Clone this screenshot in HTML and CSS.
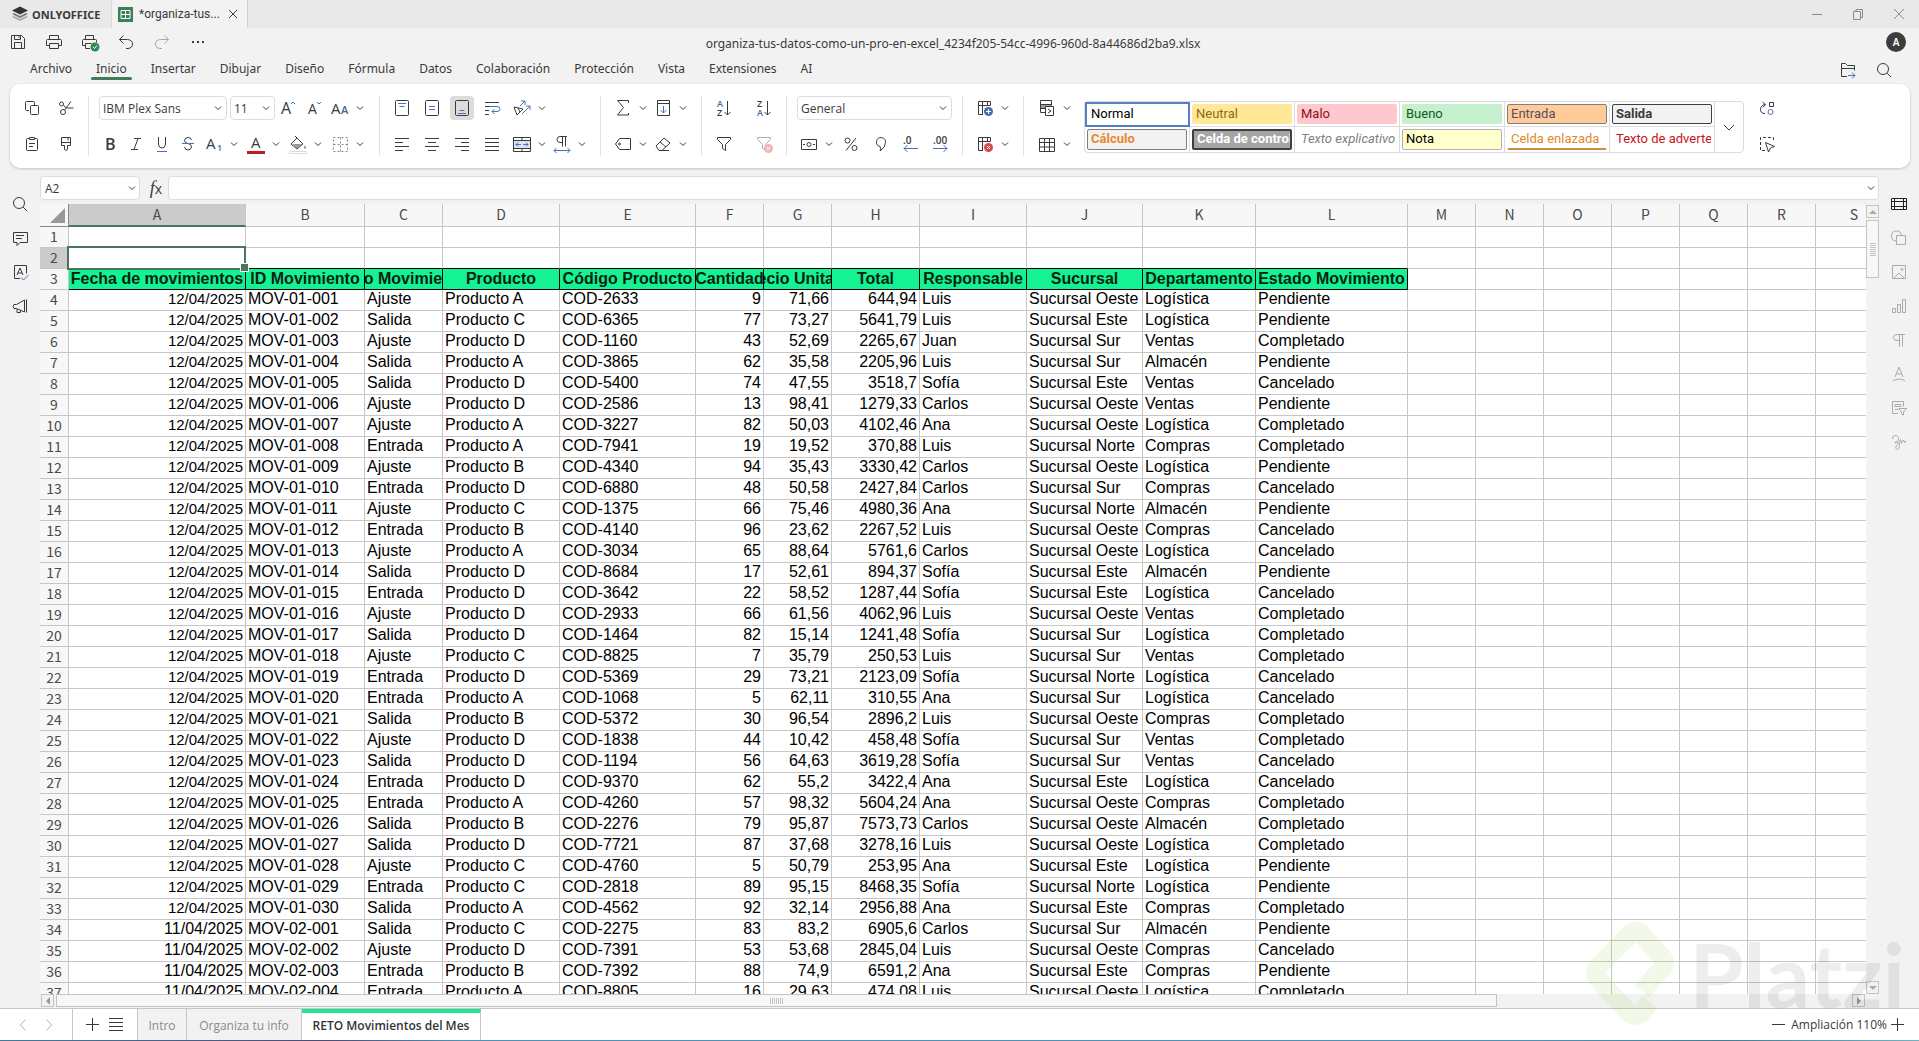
FILE: index.html
```html
<!DOCTYPE html>
<html lang="es">
<head>
    <meta charset="UTF-8">
    <meta name="viewport" content="width=device-width, initial-scale=1.0">
    <title>ONLYOFFICE</title>
    <link rel="stylesheet" href="styles.css">
</head>
<body>

<!-- icons -->
<svg class="sprite" aria-hidden="true">
    <symbol id="chev" viewBox="0 0 10 10"><path d="M2 3.500l3 3 3-3"/></symbol>
    <symbol id="save" viewBox="0 0 20 20"><path d="M3.500 3.500h10l3 3v10h-13zM6.500 3.500v4h6v-4M11 4.500v1.500M6.500 16.500v-6h7v6"/></symbol>
    <symbol id="print" viewBox="0 0 20 20"><path d="M5.500 7.500v-4h9v4M5.500 13.500h-3v-5q0-1 1-1h13q1 0 1 1v5h-3M5.500 11.500h9v5h-9z"/></symbol>
    <symbol id="printq" viewBox="0 0 20 20"><path d="M5.500 7.500v-4h8v4M5.500 13.500h-3v-5q0-1 1-1h12q1 0 1 1v2M10 16.500H5.500v-5h6"/><circle class="ok" cx="15" cy="15" r="4.500"/><path class="w" d="M13 15l1.500 1.500 2.500-3"/></symbol>
    <symbol id="undo" viewBox="0 0 20 20"><path d="M7.500 3.500l-4 4 4 4M3.500 7.500h8q5 .5 5 4.500 0 4-4.500 4.500h-2"/></symbol>
    <symbol id="redo" viewBox="0 0 20 20"><path d="M12.500 3.500l4 4-4 4M16.500 7.500h-8q-5 .5-5 4.500 0 4 4.500 4.500h2"/></symbol>
    <symbol id="dots" viewBox="0 0 20 20"><path class="f" d="M4 9h2v2H4zM9 9h2v2H9zM14 9h2v2h-2z"/></symbol>
    <symbol id="open" viewBox="0 0 20 20"><path d="M9 16.500H3.500v-13h4l2 2h7v5M3.500 8.500h13"/><path class="b" d="M10 15.500h7M14 12.500l3 3-3 3"/></symbol>
    <symbol id="search" viewBox="0 0 20 20"><circle cx="9" cy="9" r="5.500"/><path d="M13 13l4 4"/></symbol>
    <symbol id="copy" viewBox="0 0 20 20"><path d="M7 12.500H4.500q-1 0-1-1v-7q0-1 1-1h7q1 0 1 1V7"/><rect x="8.500" y="7.500" width="8" height="9" rx="1"/></symbol>
    <symbol id="cut" viewBox="0 0 20 20"><circle cx="5.500" cy="6" r="2"/><circle cx="7" cy="14" r="2.500"/><path d="M7.500 7.500l3 2.500h7M8.500 12L15 3.500"/></symbol>
    <symbol id="paste" viewBox="0 0 20 20"><rect x="4.500" y="4.500" width="11" height="12" rx="1"/><path class="p" d="M7.500 3.500h5v2h-5z"/><path d="M7 9.500h6M7 12.500h4"/></symbol>
    <symbol id="brush" viewBox="0 0 20 20"><path d="M5.500 3.500h9v8h-3v4q-1.500 2-3 0v-4h-3zM5.500 8.500h9M12 3.500v3"/></symbol>
    <symbol id="big" viewBox="0 0 20 20"><text x="3" y="16" font-size="16">A</text><path class="b" d="M13 6l2-2 2 2"/></symbol>
    <symbol id="small" viewBox="0 0 20 20"><text x="4" y="16" font-size="14">A</text><path class="b" d="M13 4l2 2 2-2"/></symbol>
    <symbol id="case" viewBox="0 0 20 20"><text x="1" y="16" font-size="15">A</text><text class="bt" x="11" y="16" font-size="11">A</text></symbol>
    <symbol id="bold" viewBox="0 0 20 20"><text x="5" y="16" font-size="16" font-weight="600">B</text></symbol>
    <symbol id="italic" viewBox="0 0 20 20"><path d="M8 4.500h7M5 15.500h7M12 4.500l-4 11"/></symbol>
    <symbol id="under" viewBox="0 0 20 20"><path d="M6.500 3v7q0 4 3.500 4t3.500-4V3"/><path class="b" d="M5 17.500h10"/></symbol>
    <symbol id="strike" viewBox="0 0 20 20"><path d="M13.500 6Q13 3.500 10 3.500T6.500 6.500Q6.500 9 10 9.500T13.500 13Q13 16 10 16T6.500 13"/><path class="b" d="M4 9.500h12"/></symbol>
    <symbol id="sub" viewBox="0 0 20 20"><text x="2" y="15" font-size="15">A</text><text class="bt" x="13" y="17" font-size="9">1</text></symbol>
    <symbol id="color" viewBox="0 0 20 20"><text x="5" y="14" font-size="15">A</text><path class="r" d="M1 17h18v3H1z"/></symbol>
    <symbol id="fill" viewBox="0 0 20 20"><path d="M3 10l6-6 6 6-6 5zM9 4L7 2"/><path class="g" d="M4.500 10h10L9 14.500zM17 11q2 3 0 4-2-1 0-4"/><path class="l" d="M1.500 17.500h17v2h-17z"/></symbol>
    <symbol id="border" viewBox="0 0 20 20"><path stroke-dasharray="2 2" d="M3.500 3.500h14v14h-14zM10.500 3.500v14M3.500 10.500h14"/></symbol>
    <symbol id="vtop" viewBox="0 0 20 20"><rect x="3.500" y="2.500" width="13" height="15" rx="1"/><path class="b" d="M6 5.500h8M7.500 8.500h5"/></symbol>
    <symbol id="vmid" viewBox="0 0 20 20"><rect x="3.500" y="2.500" width="13" height="15" rx="1"/><path class="b" d="M7 8.500h6M7 11.500h6"/></symbol>
    <symbol id="vbot" viewBox="0 0 20 20"><rect x="3.500" y="2.500" width="13" height="15" rx="1"/><path class="b" d="M7.500 12.500h5M6 15.500h8"/></symbol>
    <symbol id="wrap" viewBox="0 0 20 20"><path d="M3 4.500h14M3 12.500h4M3 16.500h4M3 8.500h4"/><path class="b" d="M7 8.500h8q3 0 3 2.500t-3 2.500h-5M12.500 11L10 13.500l2.500 2.500"/></symbol>
    <symbol id="orient" viewBox="0 0 20 20"><path d="M2 9l9 2-6 6zM6 10l2 4"/><path class="b" d="M8 8l5-5M9 3h4v4M10 16l8-8M14 8h4v4"/></symbol>
    <symbol id="hleft" viewBox="0 0 20 20"><path d="M3 4.500h14M3 8.500h8M3 12.500h14M3 16.500h8"/></symbol>
    <symbol id="hmid" viewBox="0 0 20 20"><path d="M3 4.500h14M6 8.500h8M3 12.500h14M6 16.500h8"/></symbol>
    <symbol id="hright" viewBox="0 0 20 20"><path d="M3 4.500h14M9 8.500h8M3 12.500h14M9 16.500h8"/></symbol>
    <symbol id="hjust" viewBox="0 0 20 20"><path d="M3 4.500h14M3 8.500h14M3 12.500h14M3 16.500h14"/></symbol>
    <symbol id="merge" viewBox="0 0 20 20"><path class="lb" d="M2 7h16v7H2z"/><path d="M1.500 3.500h17v14h-17zM1.500 6.500h17M1.500 14.500h17M10 3.500v3M10 14.500v3"/><path class="b" d="M4 10.500h5M11 10.500h5M6 8.500l-2 2 2 2M14 8.500l2 2-2 2"/></symbol>
    <symbol id="para" viewBox="0 0 20 20"><path d="M15 2.500H8q-3 0-3 3t3 3h2M10.500 2.500v10M13.500 2.500v10"/><path class="b" d="M2 16.500h16M4.500 14L2 16.500 4.500 19M15.500 14l2.500 2.500-2.500 2.500"/></symbol>
    <symbol id="sum" viewBox="0 0 20 20"><path d="M15.500 5V2.500h-11l6 7-6 7.500h11V15"/></symbol>
    <symbol id="filldown" viewBox="0 0 20 20"><path d="M4.500 2.500h12v15h-12zM4.500 5.500h12"/><path class="b" d="M10.500 8v7M7.500 12l3 3 3-3"/></symbol>
    <symbol id="tag" viewBox="0 0 20 20"><path d="M6.500 4.500h11v11h-11L2.500 10z"/><circle cx="6.500" cy="10" r="1"/></symbol>
    <symbol id="eraser" viewBox="0 0 20 20"><path d="M3 12l8-8 6 5-8 7.500H6zM7 8l6 5M6 16.500h10"/></symbol>
    <symbol id="az" viewBox="0 0 20 20"><text class="bt" x="3" y="9" font-size="9" font-weight="600">A</text><text x="3" y="18" font-size="9" font-weight="600">Z</text><path d="M13.500 3v14M10.500 14l3 3 3-3"/></symbol>
    <symbol id="za" viewBox="0 0 20 20"><text x="3" y="9" font-size="9" font-weight="600">Z</text><text class="bt" x="3" y="18" font-size="9" font-weight="600">A</text><path d="M13.500 3v14M10.500 14l3 3 3-3"/></symbol>
    <symbol id="filter" viewBox="0 0 20 20"><path d="M3.500 3.500h13v2l-5 5v6l-3-2v-4l-5-5z"/></symbol>
    <symbol id="nofilter" viewBox="0 0 20 20"><path d="M3.500 3.500h13v2l-5 5v6l-3-2v-4l-5-5z"/><circle class="x" cx="14.500" cy="14.500" r="4.500"/><path class="w" d="M13 13l3 3M16 13l-3 3"/></symbol>
    <symbol id="money" viewBox="0 0 20 20"><path d="M2.500 5.500h15v10h-15z"/><circle cx="10" cy="10.500" r="2"/><path class="f" d="M4 10h2v1H4zM14 10h2v1h-2z"/></symbol>
    <symbol id="percent" viewBox="0 0 20 20"><circle cx="6.500" cy="6.500" r="2.500"/><circle cx="13.500" cy="14" r="2.500"/><path d="M15 4L5 16.500"/></symbol>
    <symbol id="comma" viewBox="0 0 20 20"><path d="M9 12.500a4.500 4.500 0 1 1 5.500-4q0 5-5.500 8.500 1.500-2.500 0-4.500z"/></symbol>
    <symbol id="dec0" viewBox="0 0 20 20"><text x="2" y="10" font-size="10" font-weight="600">.0</text><path class="b" d="M3 14.500h14M6.500 11L3 14.500 6.500 18"/></symbol>
    <symbol id="dec00" viewBox="0 0 20 20"><text x="2" y="10" font-size="10" font-weight="600">.00</text><path class="b" d="M2 14.500h14M12.500 11l3.500 3.500-3.500 3.500"/></symbol>
    <symbol id="inscell" viewBox="0 0 20 20"><path d="M8 16.500H3.500v-13h12v4h-12M7.500 3.500v13M12.500 3.500v4"/><circle class="bf" cx="13.500" cy="13.500" r="4.500"/><path class="w" d="M11 13.500h5M13.500 11v5"/></symbol>
    <symbol id="delcell" viewBox="0 0 20 20"><path d="M8 16.500H3.500v-13h12v4h-12M7.500 3.500v13M12.500 3.500v4"/><circle class="x" cx="13.500" cy="13.500" r="4.500"/><path class="w" d="M12 12l3 3M15 12l-3 3"/></symbol>
    <symbol id="cond" viewBox="0 0 20 20"><path class="g" d="M3 7h11v4H3z"/><path d="M8 14.500H3.500v-12h11v5M3.500 6.500h11M3.500 10.500h5"/><path class="p" d="M8.500 8.500h8v9h-8z"/><path d="M11 11l3 2-3 2"/></symbol>
    <symbol id="table" viewBox="0 0 20 20"><path d="M2.500 4.500h15v13h-15zM2.500 8.500h15M2.500 13h15M7.500 4.500v13M12.500 4.500v13"/></symbol>
    <symbol id="replace" viewBox="0 0 20 20"><path d="M8 15.500q-4.500 0-4.500-4t4.500-5M5.500 4l3 2.500-2.500 3M12.500 4.500h4v4h-4z"/><circle class="b" cx="13.500" cy="14" r="2.500"/></symbol>
    <symbol id="select" viewBox="0 0 20 20"><path stroke-dasharray="3 2" d="M8 16.500H3.500v-13h13V8"/><path d="M8.500 8.500l9 4-4 1.500-2 4z"/></symbol>
    <symbol id="comment" viewBox="0 0 20 20"><path d="M3.500 4.500h14v10H10l-3 3v-3H3.500zM6 7.500h8M6 10.500h6"/></symbol>
    <symbol id="spell" viewBox="0 0 20 20"><path d="M10 16.500H4.500v-13h12v8M7 13l3-7 3 7M8 11h4"/><path class="b" d="M11 15.500l2.500 2.500 5-5"/></symbol>
    <symbol id="horn" viewBox="0 0 20 20"><path d="M4 8.500h2.500l8-4.500v12l-8-3.500H4q-2-2 0-4zM7 13v3.500h3.500V14M16.500 3.500v13"/></symbol>
    <symbol id="cellset" viewBox="0 0 20 20"><path d="M2.500 4.500h15v11h-15zM2.500 7.500h15M2.500 12.500h15M5.500 4.500v11M14.500 4.500v11"/></symbol>
    <symbol id="shape" viewBox="0 0 20 20"><path d="M7 13a5 5 0 1 1 5.500-5.500"/><path d="M7.500 7.500h9v9h-9z"/></symbol>
    <symbol id="image" viewBox="0 0 20 20"><path d="M3.500 3.500h13v13h-13zM5 16l5-5 5 5"/><circle cx="13" cy="7.500" r="1"/></symbol>
    <symbol id="chart" viewBox="0 0 20 20"><path d="M3.500 12.500h3v4h-3zM8.500 8.500h3v8h-3zM13.500 3.500h3v13h-3z"/></symbol>
    <symbol id="pilcrow" viewBox="0 0 20 20"><path d="M16 4.500H8q-3.500 0-3.500 3t3.500 3h2M10.500 4.500v12M13.500 4.500v12"/></symbol>
    <symbol id="textart" viewBox="0 0 20 20"><path d="M6 13l4-10 4 10M7.500 10h5M4 17q6-4 12 0"/></symbol>
    <symbol id="slicer" viewBox="0 0 20 20"><path d="M9 15.500H3.500v-12h11v5M6 6.500h6v2H6zM6 11.500h3M9.500 10.500h8l-3 3.500v3l-2-1v-2z"/></symbol>
    <symbol id="sign" viewBox="0 0 20 20"><path d="M3.500 7Q3 4 6 3.500q4 0 3.500 4-1 3-4 3 5-1 5 3 0 4-2.500 4-2.500-1-.5-4 3-2 4-6l1 4q1-4 2.500-3l.5 2 2-1"/></symbol>
</svg>

<div class="titlebar">
    <a class="brand" href="#">
        <svg width="16" height="16" viewBox="0 0 16 16"><path fill="#aaa" d="M0 11l8 4 8-4-2-1-6 3-6-3z"/><path fill="#777" d="M0 8l8 4 8-4-2-1-6 3-6-3z"/><path fill="#333" d="M0 4.500l8 4 8-4-8-4z"/></svg>
        ONLYOFFICE
    </a>
    <div class="doc-tab">
        <svg width="15" height="15" viewBox="0 0 15 15"><path fill="#3b8058" d="M0 0h15v15H0z"/><path fill="none" stroke="#fff" d="M3 3.500h9v8H3zM7.500 3.500v8M3 7.500h9"/></svg>
        <span>*organiza-tus...</span>
        <button class="close" aria-label="Cerrar"><svg width="10" height="10" viewBox="0 0 10 10"><path d="M1 1l8 8M9 1L1 9"/></svg></button>
    </div>
    <div class="win">
        <button aria-label="Minimizar"><svg width="12" height="12" viewBox="0 0 12 12"><path d="M1 6.500h10"/></svg></button>
        <button aria-label="Restaurar"><svg width="12" height="12" viewBox="0 0 12 12"><path d="M1.500 3.500h7v8h-7zM4 3.500v-2h6.500v8h-2"/></svg></button>
        <button aria-label="Cerrar"><svg width="12" height="12" viewBox="0 0 12 12"><path d="M1 1l10 10M11 1L1 11"/></svg></button>
    </div>
</div>

<header class="header">
    <div class="quick">
        <div class="quick-btns">
            <button aria-label="Guardar"><svg><use href="#save"/></svg></button>
            <button aria-label="Imprimir"><svg><use href="#print"/></svg></button>
            <button aria-label="Impresión rápida"><svg><use href="#printq"/></svg></button>
            <button aria-label="Deshacer"><svg><use href="#undo"/></svg></button>
            <button aria-label="Rehacer" class="off"><svg><use href="#redo"/></svg></button>
            <button aria-label="Más"><svg><use href="#dots"/></svg></button>
        </div>
        <div class="doc-name">organiza-tus-datos-como-un-pro-en-excel_4234f205-54cc-4996-960d-8a44686d2ba9.xlsx</div>
        <div class="user"><span>A</span></div>
    </div>
    <nav class="menu">
        <a href="#">Archivo</a>
        <a href="#" class="active">Inicio</a>
        <a href="#">Insertar</a>
        <a href="#">Dibujar</a>
        <a href="#">Diseño</a>
        <a href="#">Fórmula</a>
        <a href="#">Datos</a>
        <a href="#">Colaboración</a>
        <a href="#">Protección</a>
        <a href="#">Vista</a>
        <a href="#">Extensiones</a>
        <a href="#">AI</a>
        <div class="menu-right">
            <button aria-label="Abrir ubicación"><svg><use href="#open"/></svg></button>
            <button aria-label="Buscar"><svg><use href="#search"/></svg></button>
        </div>
    </nav>
</header>

<div class="toolbar">
    <div class="group clip">
        <div class="row"><button aria-label="Copiar"><svg><use href="#copy"/></svg></button><button aria-label="Cortar"><svg><use href="#cut"/></svg></button></div>
        <div class="row"><button aria-label="Pegar"><svg><use href="#paste"/></svg></button><button aria-label="Copiar estilo"><svg><use href="#brush"/></svg></button></div>
    </div>
    <div class="group font">
        <div class="row">
            <label class="combo font-name"><select aria-label="Fuente"><option>IBM Plex Sans</option></select><svg class="ch"><use href="#chev"/></svg></label>
            <label class="combo font-size"><select aria-label="Tamaño"><option>11</option></select><svg class="ch"><use href="#chev"/></svg></label>
            <button aria-label="Aumentar"><svg><use href="#big"/></svg></button>
            <button aria-label="Reducir"><svg><use href="#small"/></svg></button>
            <button aria-label="Mayúsculas"><svg><use href="#case"/></svg></button><button class="more" aria-label="Más"><svg class="ch"><use href="#chev"/></svg></button>
        </div>
        <div class="row">
            <button aria-label="Negrita"><svg><use href="#bold"/></svg></button>
            <button aria-label="Cursiva"><svg><use href="#italic"/></svg></button>
            <button aria-label="Subrayado"><svg><use href="#under"/></svg></button>
            <button aria-label="Tachado"><svg><use href="#strike"/></svg></button>
            <button aria-label="Subíndice"><svg><use href="#sub"/></svg></button><button class="more" aria-label="Más"><svg class="ch"><use href="#chev"/></svg></button>
            <button aria-label="Color de fuente"><svg><use href="#color"/></svg></button><button class="more" aria-label="Más"><svg class="ch"><use href="#chev"/></svg></button>
            <button aria-label="Relleno"><svg><use href="#fill"/></svg></button><button class="more" aria-label="Más"><svg class="ch"><use href="#chev"/></svg></button>
            <button aria-label="Bordes" class="gray"><svg><use href="#border"/></svg></button><button class="more" aria-label="Más"><svg class="ch"><use href="#chev"/></svg></button>
        </div>
    </div>
    <div class="group align">
        <div class="row">
            <button class="wide" aria-label="Arriba"><svg><use href="#vtop"/></svg></button>
            <button class="wide" aria-label="Medio"><svg><use href="#vmid"/></svg></button>
            <button class="wide on" aria-label="Abajo"><svg><use href="#vbot"/></svg></button>
            <button class="wide" aria-label="Ajustar texto"><svg><use href="#wrap"/></svg></button>
            <button aria-label="Orientación"><svg><use href="#orient"/></svg></button><button class="more" aria-label="Más"><svg class="ch"><use href="#chev"/></svg></button>
        </div>
        <div class="row">
            <button class="wide" aria-label="Izquierda"><svg><use href="#hleft"/></svg></button>
            <button class="wide" aria-label="Centro"><svg><use href="#hmid"/></svg></button>
            <button class="wide" aria-label="Derecha"><svg><use href="#hright"/></svg></button>
            <button class="wide" aria-label="Justificar"><svg><use href="#hjust"/></svg></button>
            <button aria-label="Combinar"><svg><use href="#merge"/></svg></button><button class="more" aria-label="Más"><svg class="ch"><use href="#chev"/></svg></button>
            <button aria-label="Dirección"><svg><use href="#para"/></svg></button><button class="more" aria-label="Más"><svg class="ch"><use href="#chev"/></svg></button>
        </div>
    </div>
    <div class="group">
        <div class="row">
            <button aria-label="Suma"><svg><use href="#sum"/></svg></button><button class="more" aria-label="Más"><svg class="ch"><use href="#chev"/></svg></button>
            <button aria-label="Rellenar"><svg><use href="#filldown"/></svg></button><button class="more" aria-label="Más"><svg class="ch"><use href="#chev"/></svg></button>
        </div>
        <div class="row">
            <button aria-label="Nombres"><svg><use href="#tag"/></svg></button><button class="more" aria-label="Más"><svg class="ch"><use href="#chev"/></svg></button>
            <button aria-label="Borrar"><svg><use href="#eraser"/></svg></button><button class="more" aria-label="Más"><svg class="ch"><use href="#chev"/></svg></button>
        </div>
    </div>
    <div class="group sort">
        <div class="row"><button aria-label="Ascendente"><svg><use href="#az"/></svg></button><button aria-label="Descendente"><svg><use href="#za"/></svg></button></div>
        <div class="row"><button aria-label="Filtro"><svg><use href="#filter"/></svg></button><button class="off" aria-label="Quitar filtro"><svg><use href="#nofilter"/></svg></button></div>
    </div>
    <div class="group number">
        <div class="row">
            <label class="combo format"><select aria-label="Formato"><option>General</option></select><svg class="ch"><use href="#chev"/></svg></label>
        </div>
        <div class="row">
            <button aria-label="Contabilidad"><svg><use href="#money"/></svg></button><button class="more" aria-label="Más"><svg class="ch"><use href="#chev"/></svg></button>
            <button class="wide" aria-label="Porcentaje"><svg><use href="#percent"/></svg></button>
            <button class="wide" aria-label="Coma"><svg><use href="#comma"/></svg></button>
            <button class="wide" aria-label="Menos decimales"><svg><use href="#dec0"/></svg></button>
            <button class="wide" aria-label="Más decimales"><svg><use href="#dec00"/></svg></button>
        </div>
    </div>
    <div class="group">
        <div class="row"><button aria-label="Insertar celdas"><svg><use href="#inscell"/></svg></button><button class="more" aria-label="Más"><svg class="ch"><use href="#chev"/></svg></button></div>
        <div class="row"><button aria-label="Eliminar celdas"><svg><use href="#delcell"/></svg></button><button class="more" aria-label="Más"><svg class="ch"><use href="#chev"/></svg></button></div>
    </div>
    <div class="group last">
        <div class="row"><button aria-label="Formato condicional"><svg><use href="#cond"/></svg></button><button class="more" aria-label="Más"><svg class="ch"><use href="#chev"/></svg></button></div>
        <div class="row"><button aria-label="Tabla"><svg><use href="#table"/></svg></button><button class="more" aria-label="Más"><svg class="ch"><use href="#chev"/></svg></button></div>
    </div>
    <div class="gallery">
        <div class="styles">
            <button class="current"><span class="s-normal">Normal</span></button>
            <button><span class="s-neutral">Neutral</span></button>
            <button><span class="s-malo">Malo</span></button>
            <button><span class="s-bueno">Bueno</span></button>
            <button><span class="s-entrada">Entrada</span></button>
            <button><span class="s-salida">Salida</span></button>
            <button><span class="s-calculo">Cálculo</span></button>
            <button><span class="s-control">Celda de control</span></button>
            <button><span class="s-explica">Texto explicativo</span></button>
            <button><span class="s-nota">Nota</span></button>
            <button><span class="s-enlazada">Celda enlazada</span></button>
            <button><span class="s-aviso">Texto de advertencia</span></button>
        </div>
        <button class="gallery-more" aria-label="Más estilos"><svg><path d="M5 8l5 5 5-5"/></svg></button>
    </div>
    <div class="group last">
        <div class="row"><button aria-label="Reemplazar"><svg><use href="#replace"/></svg></button></div>
        <div class="row"><button aria-label="Seleccionar"><svg><use href="#select"/></svg></button></div>
    </div>
</div>

<main class="work">
    <aside class="side">
        <button aria-label="Buscar"><svg><use href="#search"/></svg></button>
        <button aria-label="Comentarios"><svg><use href="#comment"/></svg></button>
        <button aria-label="Ortografía"><svg><use href="#spell"/></svg></button>
        <button aria-label="Soporte"><svg><use href="#horn"/></svg></button>
    </aside>

    <section class="center">
        <div class="formula">
            <div class="name-box"><input type="text" value="A2" aria-label="Nombre"><button aria-label="Lista de nombres"><svg class="ch"><use href="#chev"/></svg></button></div>
            <button class="fx" aria-label="Insertar función"><i>f</i>x</button>
            <div class="formula-box"><input type="text" aria-label="Fórmula"><button aria-label="Expandir"><svg class="ch"><use href="#chev"/></svg></button></div>
        </div>
        <div class="grid-area">
            <div class="sheet"><table id="sheet"></table></div>
            <div class="vscroll">
                <button aria-label="Subir"><i class="up"></i></button>
                <div class="vthumb"></div>
                <button class="end" aria-label="Bajar"><i class="down"></i></button>
            </div>
        </div>
        <div class="hscroll">
            <button aria-label="Izquierda"><i class="left"></i></button>
            <div class="hthumb"></div>
            <button class="end" aria-label="Derecha"><i class="right"></i></button>
        </div>
    </section>

    <aside class="side right-side">
        <button class="live" aria-label="Celda"><svg><use href="#cellset"/></svg></button>
        <button aria-label="Forma"><svg><use href="#shape"/></svg></button>
        <button aria-label="Imagen"><svg><use href="#image"/></svg></button>
        <button aria-label="Gráfico"><svg><use href="#chart"/></svg></button>
        <button aria-label="Párrafo"><svg><use href="#pilcrow"/></svg></button>
        <button aria-label="Arte de texto"><svg><use href="#textart"/></svg></button>
        <button aria-label="Segmentación"><svg><use href="#slicer"/></svg></button>
        <button aria-label="Firma"><svg><use href="#sign"/></svg></button>
    </aside>
</main>

<footer class="status">
    <div class="nav-tabs">
        <button class="off" aria-label="Anterior"><svg><path d="M12.500 4.500l-5 5.500 5 5.500"/></svg></button>
        <button class="off" aria-label="Siguiente"><svg><path d="M7.500 4.500l5 5.500-5 5.500"/></svg></button>
    </div>
    <div class="add-tabs">
        <button aria-label="Añadir hoja"><svg><path d="M10.500 4v13M4 10.500h13"/></svg></button>
        <button aria-label="Lista de hojas"><svg><path d="M3 4.500h14M3 8.500h14M3 12.500h14M3 16.500h14"/></svg></button>
    </div>
    <button class="tab">Intro</button>
    <button class="tab tab-info">Organiza tu info</button>
    <button class="tab tab-active">RETO Movimientos del Mes</button>
    <div class="zoom">
        <button aria-label="Alejar"><svg><path d="M4 10.500h13"/></svg></button>
        <span>Ampliación 110%</span>
        <button aria-label="Acercar"><svg><path d="M10.500 4v13M4 10.500h13"/></svg></button>
    </div>
</footer>
<div class="desktop-edge"></div>

<div class="watermark">
    <svg width="90" height="108" viewBox="0 0 90 108"><path d="M65 82L57 92Q50 100 43 92L14 60Q7 53 14 46L43 16Q51 6 58 16L76 36Q83 43 76 50L57 71"/></svg>
    <span>Platzi</span>
</div>

<script src="script.js"></script>
</body>
</html>
```

FILE: styles.css
```css
*{
    box-sizing: border-box;
}
body{
    margin: 0;
    height: 100vh;
    display: flex;
    flex-direction: column;
    overflow: hidden;
    background-color: #f2f2f2;
    color: #3a3a3a;
    font-family: 'Open Sans', 'Segoe UI', sans-serif;
    font-size: 12px;
}
a{
    color: inherit;
    text-decoration: none;
}
button{
    margin: 0;
    padding: 0;
    border: none;
    background: none;
    color: inherit;
    font-family: inherit;
    font-size: inherit;
    display: flex;
    align-items: center;
    justify-content: center;
}
input, select{
    font-family: inherit;
    font-size: inherit;
    color: inherit;
    border: none;
    outline: none;
    background: none;
    min-width: 0;
}
svg{
    flex: none;
}
button svg{
    width: 20px;
    height: 20px;
}
button svg, .ch{
    fill: none;
    stroke: #3a3a3a;
}
svg.ch{
    width: 10px;
    height: 10px;
}
.sprite{
    display: none;
}

/* icon parts */
symbol text{
    fill: #3a3a3a;
    stroke: none;
    font-family: 'Open Sans', sans-serif;
}
symbol .bt{
    fill: #446995;
    font-weight: 600;
}
.b{
    stroke: #4a72b8;
}
.w{
    stroke: #fff;
}
.f{
    fill: #3a3a3a;
    stroke: none;
}
.g{
    fill: #999;
    stroke: none;
}
.p{
    fill: #fff;
}
.l{
    stroke: #ddd;
}
.r{
    fill: #c01a1a;
    stroke: none;
}
.ok{
    fill: #2f8a55;
    stroke: none;
}
.x{
    fill: #d9484f;
    stroke: none;
}
.bf{
    fill: #446bb5;
    stroke: none;
}
.lb{
    fill: #dbe5f6;
    stroke: none;
}
.off{
    opacity: 0.4;
}

/* title bar */
.titlebar{
    height: 28px;
    flex: none;
    display: flex;
    background-color: #e9e9e9;
}
.brand{
    width: 112px;
    padding-left: 12px;
    display: flex;
    align-items: center;
    gap: 4px;
    border-right: 1px solid #dadada;
    font-family: 'Noto Sans', sans-serif;
    font-size: 11px;
    font-weight: 700;
}
.doc-tab{
    width: 136px;
    padding: 0 7px 0 6px;
    display: flex;
    align-items: center;
    gap: 6px;
    background-color: #f2f2f2;
    border-right: 1px solid #d0d0d0;
    font-family: Roboto, sans-serif;
}
.close{
    width: 14px;
    height: 14px;
    margin-left: auto;
}
.close svg{
    width: 10px;
    height: 10px;
}
.win{
    margin-left: auto;
    display: flex;
}
.win button{
    width: 41px;
}
.win svg{
    width: 12px;
    height: 12px;
    stroke: #8a8a8a;
}

/* header */
.header{
    flex: none;
    height: 56px;
    font-family: 'Noto Sans', 'Segoe UI', sans-serif;
}
.quick{
    height: 28px;
    display: flex;
    align-items: center;
}
.quick-btns, .user{
    flex: 1;
    display: flex;
}
.quick-btns button{
    width: 36px;
    height: 28px;
}
.user{
    justify-content: flex-end;
    padding-right: 13px;
}
.user span{
    width: 20px;
    height: 20px;
    border-radius: 10px;
    background-color: #3d3d3d;
    color: #fff;
    font-size: 10px;
    font-weight: 600;
    line-height: 20px;
    text-align: center;
}
.doc-name{
    padding-top: 3px;
}
.menu{
    height: 28px;
    padding-left: 18px;
    display: flex;
    align-items: center;
}
.menu a{
    height: 28px;
    padding: 0 12px;
    line-height: 26px;
    position: relative;
}
.active::after{
    content: "";
    position: absolute;
    left: 7px;
    right: 7px;
    bottom: 4px;
    height: 3px;
    border-radius: 2px;
    background-color: #437b59;
}
.menu-right{
    margin-left: auto;
    padding-right: 17px;
    display: flex;
}
.menu-right button{
    width: 36px;
    height: 28px;
}

/* toolbar */
.toolbar{
    flex: none;
    height: 84px;
    margin: 0 9px 0 10px;
    padding: 12px 0;
    display: flex;
    background-color: #fff;
    border-radius: 10px;
    box-shadow: 0 1px 3px rgba(0, 0, 0, 0.2);
}
.group{
    height: 60px;
    padding: 0 11px 0 9px;
    border-right: 1px solid #e0e0e0;
    display: flex;
    flex-direction: column;
    justify-content: space-between;
}
.row{
    display: flex;
    height: 24px;
}
.row button{
    width: 26px;
    height: 24px;
}
.row .wide{
    width: 30px;
}
.row .more{
    width: 14px;
}
.clip{
    padding: 0 9px;
}
.clip .row{
    gap: 8px;
}
.font{
    padding: 0 10px 0 8px;
}
.font .more{
    margin-right: 2px;
}
.align{
    padding-left: 7px;
}
.align .wide:nth-child(4){
    margin-right: 2px;
}
.align .on{
    width: 24px;
    margin: 0 3px;
    background-color: #dcdcdc;
    border-radius: 4px;
}
.gray svg{
    stroke: #888;
}
.sort{
    padding: 0 9px;
}
.sort .row{
    gap: 14px;
}
.number{
    padding-right: 6px;
}
.last{
    border-right: none;
    padding: 0 10px;
}
.combo{
    height: 24px;
    border: 1px solid #dcdcdc;
    border-radius: 4px;
    display: flex;
    align-items: center;
    padding-right: 3px;
}
.combo select{
    flex: 1;
    height: 22px;
    padding: 0 3px;
    appearance: none;
}
.font-name{
    width: 128px;
    margin: 0 3px 0 2px;
}
.font-size{
    width: 45px;
}
.format{
    width: 155px;
    margin-left: 1px;
}

/* cell styles */
.gallery{
    width: 660px;
    height: 52px;
    margin-top: 5px;
    display: flex;
    border: 1px solid #dcdcdc;
    border-radius: 4px;
    font-family: Roboto, sans-serif;
    font-size: 13px;
}
.styles{
    flex: 1;
    display: grid;
    grid-template-columns: repeat(6, 1fr);
    grid-template-rows: 1fr 1fr;
}
.styles button{
    min-width: 0;
    padding: 2px;
    border-right: 1px solid #dcdcdc;
    border-bottom: 1px solid #dcdcdc;
    align-items: stretch;
}
.styles button:nth-child(n+7){
    border-bottom: none;
}
.styles span{
    flex: 1;
    min-width: 0;
    padding-left: 3px;
    border: 1px solid transparent;
    border-radius: 2px;
    line-height: 18px;
    text-align: left;
    white-space: nowrap;
    overflow: hidden;
}
.styles .current{
    padding: 0;
    border: 2px solid #5580bd;
}
.s-normal{
    color: #000;
}
.s-neutral{
    background-color: #ffe999;
    color: #8f6a10;
}
.s-malo{
    background-color: #ffc7ce;
    color: #8c1018;
}
.s-bueno{
    background-color: #c6efce;
    color: #0b5e12;
}
.styles .s-entrada{
    background-color: #ffcc99;
    color: #5a4a6a;
    border-color: #7f7f7f;
}
.styles .s-salida{
    background-color: #f2f2f2;
    border-color: #3f3f3f;
    font-weight: 700;
}
.styles .s-calculo{
    background-color: #f2f2f2;
    border-color: #7f7f7f;
    color: #e8892f;
    font-weight: 700;
}
.styles .s-control{
    background-color: #a5a5a5;
    border: 2px solid #3f3f3f;
    color: #fff;
    font-weight: 700;
    line-height: 16px;
}
.s-explica{
    color: #7f7f7f;
    font-style: italic;
}
.styles .s-nota{
    background-color: #ffffcc;
    border-color: #b2b2b2;
    color: #000;
}
.styles .s-enlazada{
    color: #dd8a2e;
    border-bottom: 2px solid #c9903c;
}
.s-aviso{
    color: #c8141c;
}
.gallery-more{
    width: 28px;
}

/* work area */
.work{
    flex: 1;
    min-height: 0;
    display: flex;
}
.side{
    width: 40px;
    flex: none;
    padding-top: 19px;
}
.side button{
    width: 40px;
    height: 34px;
}
.right-side button svg{
    stroke: #aaa;
}
.right-side .live svg{
    stroke: #222;
}
.center{
    flex: 1;
    min-width: 0;
    display: flex;
    flex-direction: column;
}
.formula{
    flex: none;
    height: 36px;
    padding: 8px 0 4px;
    display: flex;
}
.name-box, .formula-box{
    display: flex;
    height: 24px;
    background-color: #fff;
    border: 1px solid #dcdcdc;
    border-radius: 4px;
}
.name-box{
    width: 100px;
}
.formula-box{
    flex: 1;
}
.name-box input, .formula-box input{
    flex: 1;
    padding: 0 4px;
}
.name-box button, .formula-box button{
    width: 14px;
}
.fx{
    width: 28px;
    padding-left: 4px;
    font-size: 14px;
}
.fx i{
    font-family: 'Liberation Serif', serif;
    font-size: 18px;
}
.grid-area{
    flex: 1;
    min-height: 0;
    display: flex;
}
.sheet{
    flex: 1;
    min-width: 0;
    overflow: hidden;
    background-color: #fff;
}

/* sheet */
table{
    table-layout: fixed;
    width: 1px;
    border-collapse: separate;
    border-spacing: 0;
    color: #000;
    font-family: 'Liberation Sans', Arial, sans-serif;
    font-size: 16px;
}
th, td{
    height: 21px;
    padding: 0;
    border-right: 1px solid #c6c6c6;
    border-bottom: 1px solid #c6c6c6;
}
th{
    background-color: #f7f7f7;
    color: #4a4a4a;
    font-family: 'Noto Sans CJK SC', sans-serif;
    font-size: 14px;
    font-weight: 400;
    line-height: 18px;
    text-align: center;
    vertical-align: top;
}
thead th{
    height: 23px;
    line-height: 20px;
}
thead th:first-child{
    border-color: #888;
}
.corner{
    margin: 4px 3px 0 auto;
    width: 15px;
    height: 15px;
    background-color: #999;
    clip-path: polygon(100% 0, 100% 100%, 0 100%);
}
.th-on{
    background-color: #cbcbcb;
}
thead .th-on{
    border-bottom: 2px solid #4a7560;
}
td div{
    height: 20px;
    padding: 0 2px;
    line-height: 18px;
    white-space: nowrap;
    overflow: hidden;
}
.num{
    text-align: right;
}
.date{
    font-size: 15px;
}
.over-head td{
    border-bottom-color: #000;
}
.over-head .blank{
    border-bottom-color: #c6c6c6;
}
.head{
    border-color: #000;
    background-color: #14f294;
    color: #05240f;
    font-weight: 700;
}
.head div{
    display: flex;
    justify-content: center;
    padding: 0;
    line-height: 19px;
}
.selected{
    position: relative;
}
.selected::before{
    content: "";
    position: absolute;
    inset: -2px -1px -2px -2px;
    border: 2px solid #4a7560;
}
.selected::after{
    content: "";
    position: absolute;
    right: -4px;
    bottom: -4px;
    width: 7px;
    height: 7px;
    background-color: #4a7560;
    border: 1px solid #fff;
}

/* scrollbars */
.vscroll{
    width: 13px;
    flex: none;
    padding-top: 1px;
    display: flex;
    flex-direction: column;
    gap: 2px;
}
.hscroll{
    height: 14px;
    flex: none;
    padding: 0 14px 1px 1px;
    display: flex;
    gap: 2px;
}
.vscroll button, .hscroll button{
    width: 13px;
    height: 13px;
    border: 1px solid #c4c4c4;
}
.vscroll .end{
    margin-top: auto;
}
.hscroll .end{
    margin-left: auto;
}
.vthumb, .hthumb{
    background-color: #f7f7f7;
    border: 1px solid #c4c4c4;
    display: flex;
    align-items: center;
    justify-content: center;
}
.vthumb{
    height: 58px;
}
.hthumb{
    width: 79%;
    margin-right: 5px;
}
.vthumb::after, .hthumb::after{
    content: "";
}
.vthumb::after{
    width: 6px;
    height: 13px;
    background: repeating-linear-gradient(#c4c4c4 0 1px, transparent 1px 2px);
}
.hthumb::after{
    width: 13px;
    height: 6px;
    background: repeating-linear-gradient(90deg, #c4c4c4 0 1px, transparent 1px 2px);
}
.up, .down, .left, .right{
    border: 4px solid transparent;
}
.up{
    border-top: none;
    border-bottom-color: #aaa;
}
.down{
    border-bottom: none;
    border-top-color: #aaa;
}
.left{
    border-left: none;
    border-right-color: #999;
}
.right{
    border-right: none;
    border-left-color: #999;
}

/* status bar */
.status{
    flex: none;
    height: 32px;
    display: flex;
    background-color: #fff;
    border-top: 1px solid #c6c6c6;
}
.nav-tabs{
    width: 73px;
    display: flex;
    padding-left: 10px;
    border-right: 1px solid #c6c6c6;
}
.nav-tabs button{
    width: 26px;
}
.add-tabs{
    width: 65px;
    padding: 0 8px 2px 7px;
    display: flex;
    border-right: 1px solid #c6c6c6;
}
.add-tabs button{
    width: 24px;
}
.tab{
    width: 49px;
    padding-top: 2px;
    background-color: #f2f2f2;
    border-right: 1px solid #c6c6c6;
    color: #8a8a8a;
}
.tab-info{
    width: 115px;
}
.tab-active{
    width: 179px;
    padding: 0 0 2px;
    background-color: #fff;
    border-top: 4px solid #22e596;
    color: #333;
    font-weight: 600;
}
.zoom{
    margin-left: auto;
    padding: 0 12px 2px 0;
    display: flex;
    align-items: center;
}
.zoom button{
    height: 28px;
}
.zoom span{
    padding: 2px 0 0 3px;
}
.desktop-edge{
    flex: none;
    height: 1px;
    background: linear-gradient(90deg, #3f7ca0, #4d4a78 17%, #4b93b8 24%, #4b93b8 80%, #3f7f98 90%, #6fb4c4);
}

/* watermark */
.watermark{
    position: absolute;
    right: 14px;
    bottom: 13px;
    display: flex;
    align-items: center;
    gap: 14px;
    pointer-events: none;
    color: rgba(0, 0, 0, 0.07);
    font-family: Lato, sans-serif;
    font-size: 88px;
    font-weight: 700;
    line-height: 108px;
}
.watermark path{
    fill: none;
    stroke: rgba(152, 202, 63, 0.12);
    stroke-width: 19px;
}
```

FILE: script.js
```js
let columns = [
    ['A', 177], ['B', 119], ['C', 78], ['D', 117], ['E', 136], ['F', 68], ['G', 68],
    ['H', 88], ['I', 107], ['J', 116], ['K', 113], ['L', 152], ['M', 68], ['N', 68],
    ['O', 68], ['P', 68], ['Q', 68], ['R', 68], ['S', 77], ['T', 68], ['U', 68]
];

let titles = ['Fecha de movimientos', 'ID Movimiento', 'Tipo Movimiento', 'Producto', 'Código Producto',
    'Cantidad', 'Precio Unitario', 'Total', 'Responsable', 'Sucursal', 'Departamento', 'Estado Movimiento'];

// id, tipo, producto, código, cantidad, precio, total, responsable, sucursal, departamento, estado
let data = `
01-001,Ajuste,A,2633,9,71.66,644.94,Luis,Oeste,Logística,Pendiente
01-002,Salida,C,6365,77,73.27,5641.79,Luis,Este,Logística,Pendiente
01-003,Ajuste,D,1160,43,52.69,2265.67,Juan,Sur,Ventas,Completado
01-004,Salida,A,3865,62,35.58,2205.96,Luis,Sur,Almacén,Pendiente
01-005,Salida,D,5400,74,47.55,3518.7,Sofía,Este,Ventas,Cancelado
01-006,Ajuste,D,2586,13,98.41,1279.33,Carlos,Oeste,Ventas,Pendiente
01-007,Ajuste,A,3227,82,50.03,4102.46,Ana,Oeste,Logística,Completado
01-008,Entrada,A,7941,19,19.52,370.88,Luis,Norte,Compras,Completado
01-009,Ajuste,B,4340,94,35.43,3330.42,Carlos,Oeste,Logística,Pendiente
01-010,Entrada,D,6880,48,50.58,2427.84,Carlos,Sur,Compras,Cancelado
01-011,Ajuste,C,1375,66,75.46,4980.36,Ana,Norte,Almacén,Pendiente
01-012,Entrada,B,4140,96,23.62,2267.52,Luis,Oeste,Compras,Cancelado
01-013,Ajuste,A,3034,65,88.64,5761.6,Carlos,Oeste,Logística,Cancelado
01-014,Salida,D,8684,17,52.61,894.37,Sofía,Este,Almacén,Pendiente
01-015,Entrada,D,3642,22,58.52,1287.44,Sofía,Este,Logística,Cancelado
01-016,Ajuste,D,2933,66,61.56,4062.96,Luis,Oeste,Ventas,Completado
01-017,Salida,D,1464,82,15.14,1241.48,Sofía,Sur,Logística,Completado
01-018,Ajuste,C,8825,7,35.79,250.53,Luis,Sur,Ventas,Completado
01-019,Entrada,D,5369,29,73.21,2123.09,Sofía,Norte,Logística,Cancelado
01-020,Entrada,A,1068,5,62.11,310.55,Ana,Sur,Logística,Cancelado
01-021,Salida,B,5372,30,96.54,2896.2,Luis,Oeste,Compras,Completado
01-022,Ajuste,D,1838,44,10.42,458.48,Sofía,Sur,Ventas,Completado
01-023,Salida,D,1194,56,64.63,3619.28,Sofía,Sur,Ventas,Cancelado
01-024,Entrada,D,9370,62,55.2,3422.4,Ana,Este,Logística,Cancelado
01-025,Entrada,A,4260,57,98.32,5604.24,Ana,Oeste,Compras,Completado
01-026,Salida,B,2276,79,95.87,7573.73,Carlos,Oeste,Almacén,Completado
01-027,Salida,D,7721,87,37.68,3278.16,Luis,Oeste,Logística,Completado
01-028,Ajuste,C,4760,5,50.79,253.95,Ana,Este,Logística,Pendiente
01-029,Entrada,C,2818,89,95.15,8468.35,Sofía,Norte,Logística,Pendiente
01-030,Salida,A,4562,92,32.14,2956.88,Ana,Este,Compras,Completado
02-001,Salida,C,2275,83,83.2,6905.6,Carlos,Sur,Almacén,Pendiente
02-002,Ajuste,D,7391,53,53.68,2845.04,Luis,Oeste,Compras,Cancelado
02-003,Entrada,B,7392,88,74.9,6591.2,Ana,Este,Compras,Pendiente
02-004,Entrada,A,8805,16,29.63,474.08,Luis,Oeste,Logística,Completado
`.trim().split('\n');

function cell(text, cls){
    return `<td class="${cls}"><div>${text}</div></td>`;
}

function blanks(n){
    return cell('', 'blank').repeat(n);
}

function showsheet(){
    let extra = columns.length - titles.length;
    let html = '<colgroup><col style="width:29px">';
    columns.forEach(c => html += `<col style="width:${c[1]}px">`);
    html += '</colgroup><thead><tr><th><div class="corner"></div></th>';
    columns.forEach(c => html += `<th class="${c[0] === 'A' ? 'th-on' : ''}">${c[0]}</th>`);
    html += '</tr></thead><tbody>';

    html += '<tr><th>1</th>' + blanks(columns.length) + '</tr>';
    html += '<tr class="over-head"><th class="th-on">2</th>' + cell('', 'selected')
        + cell('', '').repeat(titles.length - 1) + blanks(extra) + '</tr>';
    html += '<tr><th>3</th>' + titles.map(t => cell(`<span>${t}</span>`, 'head')).join('') + blanks(extra) + '</tr>';

    data.forEach((line, i) => {
        let d = line.split(',');
        let first = d[0].startsWith('01');
        html += `<tr><th>${i + 4}</th>`
            + cell(first ? '12/04/2025' : '11/04/2025', first ? 'num date' : 'num')
            + cell('MOV-' + d[0], '')
            + cell(d[1], '')
            + cell('Producto ' + d[2], '')
            + cell('COD-' + d[3], '')
            + cell(d[4], 'num')
            + cell(d[5].replace('.', ','), 'num')
            + cell(d[6].replace('.', ','), 'num')
            + cell(d[7], '')
            + cell('Sucursal ' + d[8], '')
            + cell(d[9], '')
            + cell(d[10], '')
            + blanks(extra) + '</tr>';
    });
    document.querySelector('#sheet').innerHTML = html + '</tbody>';
}

showsheet();
```
